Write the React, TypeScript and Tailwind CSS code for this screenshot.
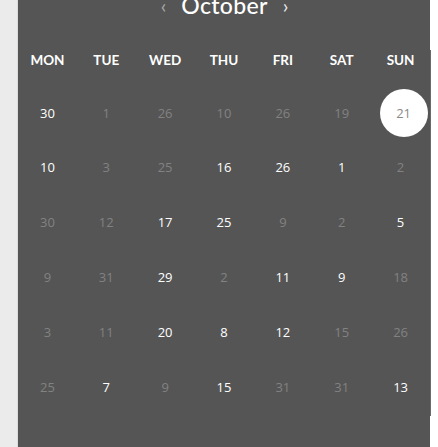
const WEEKDAYS = ['MON', 'TUE', 'WED', 'THU', 'FRI', 'SAT', 'SUN'];

// [value, active]
const ROWS: [number, boolean][][] = [
  [[30, true], [1, false], [26, false], [10, false], [26, false], [19, false], [21, false]],
  [[10, true], [3, false], [25, false], [16, true], [26, true], [1, true], [2, false]],
  [[30, false], [12, false], [17, true], [25, true], [9, false], [2, false], [5, true]],
  [[9, false], [31, false], [29, true], [2, false], [11, true], [9, true], [18, false]],
  [[3, false], [11, false], [20, true], [8, true], [12, true], [15, false], [26, false]],
  [[25, false], [7, true], [9, false], [15, true], [31, false], [31, false], [13, true]],
];

export default function App() {
  const selected = { row: 0, col: 6 };

  return (
    <div className="flex h-[447px] w-[438px] overflow-hidden bg-white font-['Lato',sans-serif]">
      <div className="w-[18px] shrink-0 border-r border-[#dcdcdc] bg-[#ebebeb]" />

      <div className="w-[412px] shrink-0 bg-[#555555]">
        {/* month header */}
        <div className="-mt-[6px] flex h-[41px] items-start justify-center gap-[15px] pl-[1px]">
          <span className="text-[20px] leading-[22px] text-[#a8a8a8]">‹</span>
          <span className="text-[23px] leading-[22px] font-medium tracking-[0.3px] text-white">October</span>
          <span className="text-[20px] leading-[22px] text-[#e8e8e8]">›</span>
        </div>

        <div className="grid h-[51px] grid-cols-7 items-center">
          {WEEKDAYS.map((d) => (
            <div key={d} className="text-center text-[13.5px] font-bold text-white">
              {d}
            </div>
          ))}
        </div>

        {ROWS.map((row, r) => (
          <div key={r} className="grid h-[54.8px] grid-cols-7 items-center font-['Open_Sans',sans-serif]">
            {row.map(([n, active], c) => {
              const isSel = selected.row === r && selected.col === c;
              if (isSel) {
                return (
                  <div key={c} className="flex justify-center">
                    <div className="flex h-[48px] w-[48px] translate-x-[3px] items-center justify-center rounded-full bg-white text-[13px] text-[#8a8a8a]">
                      {n}
                    </div>
                  </div>
                );
              }
              return (
                <div
                  key={c}
                  className={`text-center text-[13px] ${active ? 'text-white' : 'text-[#828282]'}`}
                >
                  {n}
                </div>
              );
            })}
          </div>
        ))}
      </div>

      <div className="flex-1 bg-white">
        <div className="mt-[50px] h-[366px] border-l border-[#6a6a6a]" />
      </div>
    </div>
  );
}
